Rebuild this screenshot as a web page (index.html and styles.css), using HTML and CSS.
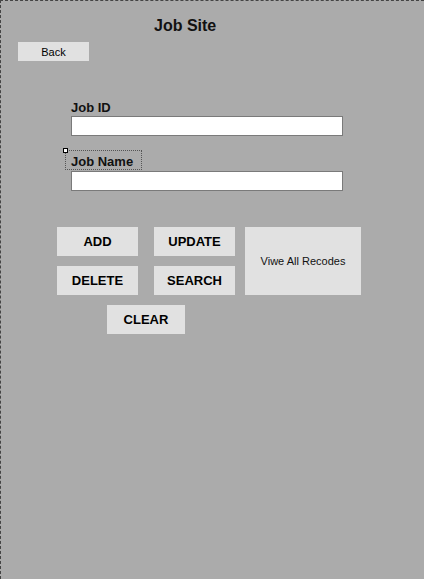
FILE: index.html
```html
<!DOCTYPE html>
<html>
<head>
	<title>Job Site</title>

	<link rel="stylesheet" href="styles.css">

</head>
<body>

	<div class="window">
		<h1 class="title">Job Site</h1>
		<button class="back-btn">Back</button>

		<div class="fields">
			<label class="field-label" for="job-id">Job ID</label>
			<input class="field-input" type="text" id="job-id">

			<div class="label-wr">
				<span class="handle"></span>
				<label class="field-label selected" for="job-name">Job Name</label>
			</div>
			<input class="field-input input-second" type="text" id="job-name">
		</div>

		<div class="actions">
			<button class="btn">ADD</button>
			<button class="btn">UPDATE</button>
			<button class="btn btn-view">Viwe All Recodes</button>
			<button class="btn">DELETE</button>
			<button class="btn">SEARCH</button>
		</div>
		<div class="clear-row">
			<button class="btn btn-clear">CLEAR</button>
		</div>
	</div>

</body>
</html>
```

FILE: styles.css
```css
body {
	margin: 0;
	background-color: #ababab;
	font-family: "Liberation Sans", Arial, sans-serif;
	color: #000;
}
.window {
	width: 424px;
	height: 579px;
	box-sizing: border-box;
	border-top: 1px dashed #444;
	border-left: 1px dashed #444;
	background-color: #ababab;
}
.title {
	margin: 16px 0 0 153px;
	font-size: 16px;
	line-height: 18px;
	font-weight: bold;
	color: #111;
}
.back-btn {
	display: block;
	margin: 7px 0 0 17px;
	width: 71px;
	height: 19px;
	padding: 0;
	border: none;
	background-color: #e1e1e1;
	font-family: inherit;
	font-size: 11px;
	color: #000;
}
.fields {
	margin: 39px 0 0 70px;
	width: 272px;
}
.field-label {
	display: block;
	font-size: 13px;
	line-height: 15px;
	font-weight: bold;
	color: #111;
	margin-bottom: 1px;
}
.field-input {
	display: block;
	width: 272px;
	height: 20px;
	box-sizing: border-box;
	margin: 0;
	border: 1px solid #7a7a7a;
	background-color: #fff;
	outline: none;
}
.label-wr {
	position: relative;
	margin: 14px 0 0 -6px;
}
.selected {
	display: inline-block;
	border: 1px dotted #555;
	padding: 3px 8px 0 5px;
	margin-bottom: 0;
}
.handle {
	position: absolute;
	left: -2px;
	top: -2px;
	width: 3px;
	height: 3px;
	border: 1px solid #000;
	background-color: #fff;
}
.input-second {
	margin-top: 1px;
}
.actions {
	display: grid;
	grid-template-columns: 81px 81px 116px;
	grid-template-rows: 29px 29px;
	column-gap: 16px;
	row-gap: 10px;
	margin: 36px 0 0 56px;
}
.btn {
	padding: 0;
	border: none;
	background-color: #e1e1e1;
	font-family: inherit;
	font-size: 13px;
	font-weight: bold;
	color: #000;
}
.btn-view {
	grid-column: 3;
	grid-row: 1 / 3;
	width: 116px;
	margin-left: -6px;
	font-size: 11px;
	font-weight: normal;
	color: #111;
}
.clear-row {
	margin: 10px 0 0 106px;
}
.btn-clear {
	width: 78px;
	height: 29px;
}
```
